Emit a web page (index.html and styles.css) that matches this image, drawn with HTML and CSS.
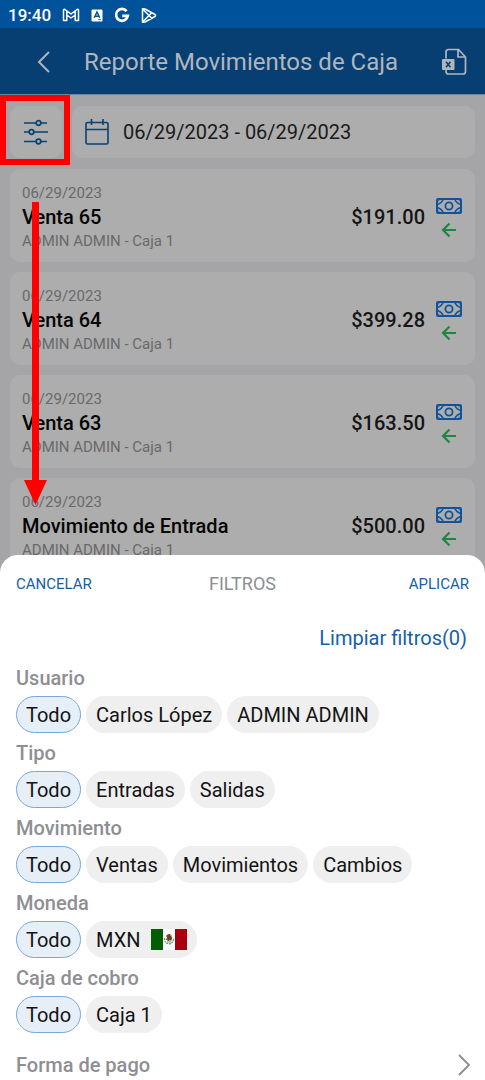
FILE: index.html
```html
<!DOCTYPE html>
<html lang="es">
<head>
<meta charset="utf-8">
<meta name="viewport" content="width=device-width, initial-scale=1">
<title>Reporte Movimientos de Caja</title>
<link rel="stylesheet" href="styles.css">
</head>
<body>
<svg width="0" height="0" class="defs" aria-hidden="true">
  <symbol id="cash" viewBox="0 0 26 16">
    <g fill="none" stroke="#10539a" stroke-width="2">
      <rect x="1" y="1" width="24" height="14" rx="1"/>
      <circle cx="13" cy="8" r="3.600" stroke-width="1.800"/>
      <path d="M1 6.500Q5.500 5.500 7.500 1M1 9.500Q5.500 10.500 7.500 15M25 6.500Q20.500 5.500 18.500 1M25 9.500Q20.500 10.500 18.500 15" stroke-width="1.600"/>
    </g>
    <path d="M1 1h4L1 5zM25 1h-4l4 4zM1 15h4l-4-4zM25 15h-4l4-4z" fill="#10539a" opacity=".6"/>
  </symbol>
  <symbol id="in" viewBox="0 0 16 16">
    <path d="M15 8H2M8.500 1.500L2 8l6.500 6.500" fill="none" stroke="#1f8544" stroke-width="2.200"/>
  </symbol>
</svg>
<div class="app">
  <div class="status">
    <span>19:40</span>
    <svg width="18" height="14" viewBox="0 0 18 14" fill="none" stroke="#fff" stroke-width="1.500" stroke-linejoin="round"><path d="M1.500 12.500V2Q1.500 1 3 1.500L9 6l6-4.500Q16.500 1 16.500 2v10.500h-3.300V7L9 10 4.800 7v5.500zM4.800 7V3M13.200 7V3"/></svg>
    <svg width="12" height="13" viewBox="0 0 12 13"><rect x=".5" y=".5" width="11" height="12" rx="1" fill="#fff"/><path d="M3.300 8.800L6 3l2.700 5.800M4.300 7.200h3.400" fill="none" stroke="#00529a" stroke-width="1.500"/><path d="M7 10.700h3" stroke="#00529a" stroke-width=".8"/></svg>
    <svg width="16" height="16" viewBox="0 0 16 16" fill="none" stroke="#fff" stroke-width="2.700"><path d="M12.600 4.200A5.900 5.900 0 1 0 13.800 8.800H8.200"/></svg>
    <svg width="16" height="17" viewBox="0 0 16 17" fill="none" stroke="#fff" stroke-width="1.500" stroke-linejoin="round"><path d="M1.500 1.800v13.400L4 15l10-5.500q1.200-1 0-2L4 2zM1.800 2.300L11 11.500M1.800 14.700L11 5.500"/></svg>
  </div>
  <header class="header">
    <button class="icon-btn back" aria-label="Volver"><svg width="14" height="22" viewBox="0 0 14 22" fill="none" stroke="#adb4bc" stroke-width="2"><path d="M12 1L2 11l10 10"/></svg></button>
    <h1>Reporte Movimientos de Caja</h1>
    <button class="icon-btn" aria-label="Exportar a Excel"><svg width="25" height="28" viewBox="0 0 25 28"><path d="M4 10.500V4q0-2.500 2.500-2.500h10L23.500 9v14.500q0 2.500-2.500 2.500H6.500Q4 26 4 23.500V22M16 1.500V9h7.500" fill="none" stroke="#b0b6bd" stroke-width="1.700"/><rect y="11" width="12.500" height="11" rx="1" fill="#b0b6bd"/><path d="M4 13.700l4.500 5.500M8.500 13.700L4 19.200" stroke="#073f73" stroke-width="1.500"/></svg></button>
  </header>
  <main class="content">
    <div class="toolbar">
      <button class="tile filter" aria-label="Filtros"><svg width="26" height="28" viewBox="0 0 26 28" fill="none" stroke="#084174" stroke-width="1.700"><path d="M1 5h12M18 5h6M1 14h5M11 14h14M1 23.500h12M18 23.500h6"/><circle cx="15.500" cy="5" r="2.300"/><circle cx="8.500" cy="14" r="2.300"/><circle cx="15.500" cy="23.500" r="2.300"/></svg></button>
      <button class="tile dates"><svg width="24" height="28" viewBox="0 0 24 28" fill="none" stroke="#084174" stroke-width="1.600"><rect x="1" y="4.500" width="22" height="21.500" rx="1.500"/><path d="M1 11.500h22M6.500 1v6M18 1v6"/></svg><span>06/29/2023 - 06/29/2023</span></button>
    </div>
    <article class="tile card"><div class="info"><time>06/29/2023</time><h2>Venta 65</h2><p>ADMIN ADMIN - Caja 1</p></div><strong>$191.00</strong><div class="kinds"><svg width="26" height="16"><use href="#cash"/></svg><svg width="16" height="16"><use href="#in"/></svg></div></article>
    <article class="tile card"><div class="info"><time>06/29/2023</time><h2>Venta 64</h2><p>ADMIN ADMIN - Caja 1</p></div><strong>$399.28</strong><div class="kinds"><svg width="26" height="16"><use href="#cash"/></svg><svg width="16" height="16"><use href="#in"/></svg></div></article>
    <article class="tile card"><div class="info"><time>06/29/2023</time><h2>Venta 63</h2><p>ADMIN ADMIN - Caja 1</p></div><strong>$163.50</strong><div class="kinds"><svg width="26" height="16"><use href="#cash"/></svg><svg width="16" height="16"><use href="#in"/></svg></div></article>
    <article class="tile card"><div class="info"><time>06/29/2023</time><h2>Movimiento de Entrada</h2><p>ADMIN ADMIN - Caja 1</p></div><strong>$500.00</strong><div class="kinds"><svg width="26" height="16"><use href="#cash"/></svg><svg width="16" height="16"><use href="#in"/></svg></div></article>
  </main>
</div>
<div class="highlight"></div>
<svg class="pointer" width="24" height="304" viewBox="0 0 24 304" aria-hidden="true"><path d="M8 0h7v278h8L11.500 303 0 278h8z" fill="#f00"/></svg>
<section class="sheet" aria-label="Filtros">
  <div class="sheet-head">
    <button class="link">CANCELAR</button>
    <h2>FILTROS</h2>
    <button class="link">APLICAR</button>
  </div>
  <button class="clear">Limpiar filtros(0)</button>
  <h3>Usuario</h3>
  <div class="chips"><button class="chip on">Todo</button><button class="chip">Carlos López</button><button class="chip">ADMIN ADMIN</button></div>
  <h3>Tipo</h3>
  <div class="chips"><button class="chip on">Todo</button><button class="chip">Entradas</button><button class="chip">Salidas</button></div>
  <h3>Movimiento</h3>
  <div class="chips"><button class="chip on">Todo</button><button class="chip">Ventas</button><button class="chip">Movimientos</button><button class="chip">Cambios</button></div>
  <h3>Moneda</h3>
  <div class="chips"><button class="chip on">Todo</button><button class="chip">MXN <svg width="36" height="21" viewBox="0 0 36 21"><path d="M0 0h12v21H0z" fill="#045d05"/><path d="M12 0h12v21H12z" fill="#fff"/><path d="M24 0h12v21H24z" fill="#a8000d"/><path d="M13.500 9q-.5 5 4.500 6 5-1 4.500-6" fill="none" stroke="#679364" stroke-width="1.200" stroke-dasharray="2 .7"/><path d="M15 7q3-3.500 5.500-.5 1.500 3-.3 5.500l-1.500-.8-2 1.300-.4-2-2 .5 2-2.500z" fill="#70431f"/><path d="M16 13h4" stroke="#5b9d9b"/><path d="M19 6l2 2" stroke="#b99347"/></svg></button></div>
  <h3>Caja de cobro</h3>
  <div class="chips"><button class="chip on">Todo</button><button class="chip">Caja 1</button></div>
  <button class="more"><span>Forma de pago</span><svg width="13" height="22" viewBox="0 0 13 22" fill="none" stroke="#8c8c91" stroke-width="1.800"><path d="M1 1l10 10L1 21"/></svg></button>
</section>
</body>
</html>
```
FILE: styles.css
```css
* { box-sizing: border-box; }
body { margin: 0; font-family: Roboto, "Liberation Sans", sans-serif; color: #111; }
h1, h2, h3, p { margin: 0; font-weight: 400; }
button { font: inherit; color: inherit; background: none; border: 0; padding: 0; }
svg { display: block; flex: none; }
.defs { position: absolute; }
.app { height: 100vh; overflow: hidden; background: #a5a5a8; }
.status { display: flex; align-items: center; gap: 11px; height: 28px; padding: 2px 8px 0; background: #00529a; color: #fff; font-size: 17px; font-weight: 500; }
.header { display: flex; align-items: center; height: 67px; padding: 2px 18px 0 37px; background: #073f73; color: #b0b6bd; border-bottom: 1px solid #6f8297; }
.back { margin-right: 33px; }
.header h1 { flex: 1; font-size: 24px; white-space: nowrap; }
.content { display: flex; flex-direction: column; gap: 10px; padding: 11px 10px; }
.toolbar { display: flex; gap: 10px; margin-bottom: 1px; }
.tile { background: #adadad; border-radius: 10px; }
.filter { display: grid; place-items: center; width: 52px; height: 52px; }
.dates { display: flex; flex: 1; align-items: center; gap: 14px; height: 52px; padding: 0 13px; font-size: 20px; color: #1a1a1a; }
.card { display: flex; align-items: center; height: 93px; padding: 2px 13px 0 12px; }
.info { flex: 1; color: #69696b; font-size: 15px; line-height: 24px; }
.info time { display: block; }
.info h2 { font-size: 20px; font-weight: 500; color: #050505; }
.card strong { font-size: 20px; font-weight: 500; color: #151515; }
.kinds { display: grid; justify-items: center; gap: 8px; margin-left: 11px; padding-top: 3px; }
.highlight { position: absolute; top: 95px; left: 0; width: 70px; height: 70px; border: 6px solid #f00; }
.pointer { position: absolute; top: 202px; left: 24px; }
.sheet { position: fixed; left: 0; right: 0; bottom: 0; display: flex; flex-direction: column; padding: 0 16px; background: #fff; border-radius: 18px 18px 0 0; color: #141414; font-size: 20px; }
.sheet-head { display: grid; grid-template-columns: 1fr auto 1fr; align-items: center; height: 57px; }
.sheet-head h2 { font-size: 18px; color: #8e8e93; }
.link { justify-self: start; color: #1460ab; font-size: 15px; }
.link:last-child { justify-self: end; }
.clear { align-self: flex-end; height: 40px; margin: 6px 2px 0 0; color: #1460ab; }
.sheet h3 { height: 38px; padding-top: 3px; line-height: 35px; font-size: 20px; font-weight: 500; color: #8e8e93; }
.chips { display: flex; gap: 5px; }
.chip { display: flex; align-items: center; gap: 10px; height: 37px; padding: 0 9px; border-radius: 19px; background: #efefef; border: 1px solid #efefef; }
.chip.on { background: #e6eef7; border-color: #7aa8d8; }
.more { display: flex; align-items: center; justify-content: space-between; height: 47px; margin-right: -2px; padding-top: 16px; color: #8e8e93; font-weight: 500; }
```
